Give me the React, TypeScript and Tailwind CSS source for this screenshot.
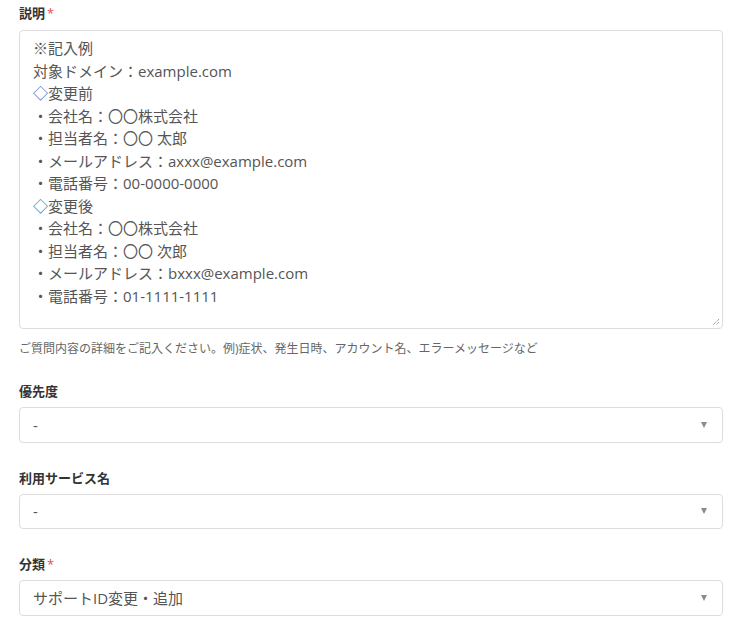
import React from "react";

const sample = [
  "※記入例",
  "対象ドメイン：example.com",
  "◇変更前",
  "・会社名：〇〇株式会社",
  "・担当者名：〇〇 太郎",
  "・メールアドレス：axxx@example.com",
  "・電話番号：00-0000-0000",
  "◇変更後",
  "・会社名：〇〇株式会社",
  "・担当者名：〇〇 次郎",
  "・メールアドレス：bxxx@example.com",
  "・電話番号：01-1111-1111",
];

function Label({ text, required }: { text: string; required?: boolean }) {
  return (
    <div className="h-5 mb-[6px] text-[13px] leading-5 font-bold text-[#333]">
      {text}
      {required && <span className="text-[#e34f4f] font-normal ml-[2px]">*</span>}
    </div>
  );
}

function FakeSelect({ value }: { value: string }) {
  return (
    <div className="h-[35.5px] flex items-center justify-between border border-[#ddd] rounded-[4px] bg-white pl-[13px] pr-[15px] text-[15px] text-[#555]">
      <span>{value}</span>
      <span className="w-0 h-0 border-l-[3.5px] border-r-[3.5px] border-t-[6px] border-l-transparent border-r-transparent border-t-[#8a8a8a]" />
    </div>
  );
}

export default function App() {
  return (
    <div
      className="bg-white min-h-screen pt-[3px] pl-[19px] pr-[27px]"
      style={{ fontFamily: '"Open Sans", "Noto Sans CJK JP", sans-serif' }}
    >
      <div className="h-5 mb-[7px] text-[13px] leading-5 font-bold text-[#333]">
        説明<span className="text-[#e34f4f] font-normal ml-[2px]">*</span>
      </div>
      <div className="relative">
        <div className="h-[299px] border border-[#ddd] rounded-[4px] pt-[6px] px-[13px] text-[15px] leading-[22.5px] text-[#555] overflow-hidden">
          {sample.map((line, i) =>
            line.startsWith("◇") ? (
              <div key={i}>
                <span className="text-[#3a78c2]">◇</span>
                {line.slice(1)}
              </div>
            ) : (
              <div key={i}>{line}</div>
            )
          )}
        </div>
        <svg className="absolute right-[3px] bottom-[3px]" width="8" height="8" viewBox="0 0 8 8">
          <path d="M7 1 L1 7 M7 4 L4 7" stroke="#777" strokeWidth="1" strokeDasharray="1 1" />
        </svg>
      </div>
      <p className="mt-[11px] text-[12px] leading-[18px] text-[#666]">
        ご質問内容の詳細をご記入ください。例)症状、発生日時、アカウント名、エラーメッセージなど
      </p>

      <div className="mt-[23px]">
        <Label text="優先度" />
        <FakeSelect value="-" />
      </div>
      <div className="mt-[25px]">
        <Label text="利用サービス名" />
        <FakeSelect value="-" />
      </div>
      <div className="mt-[25px]">
        <Label text="分類" required />
        <FakeSelect value="サポートID変更・追加" />
      </div>
    </div>
  );
}
